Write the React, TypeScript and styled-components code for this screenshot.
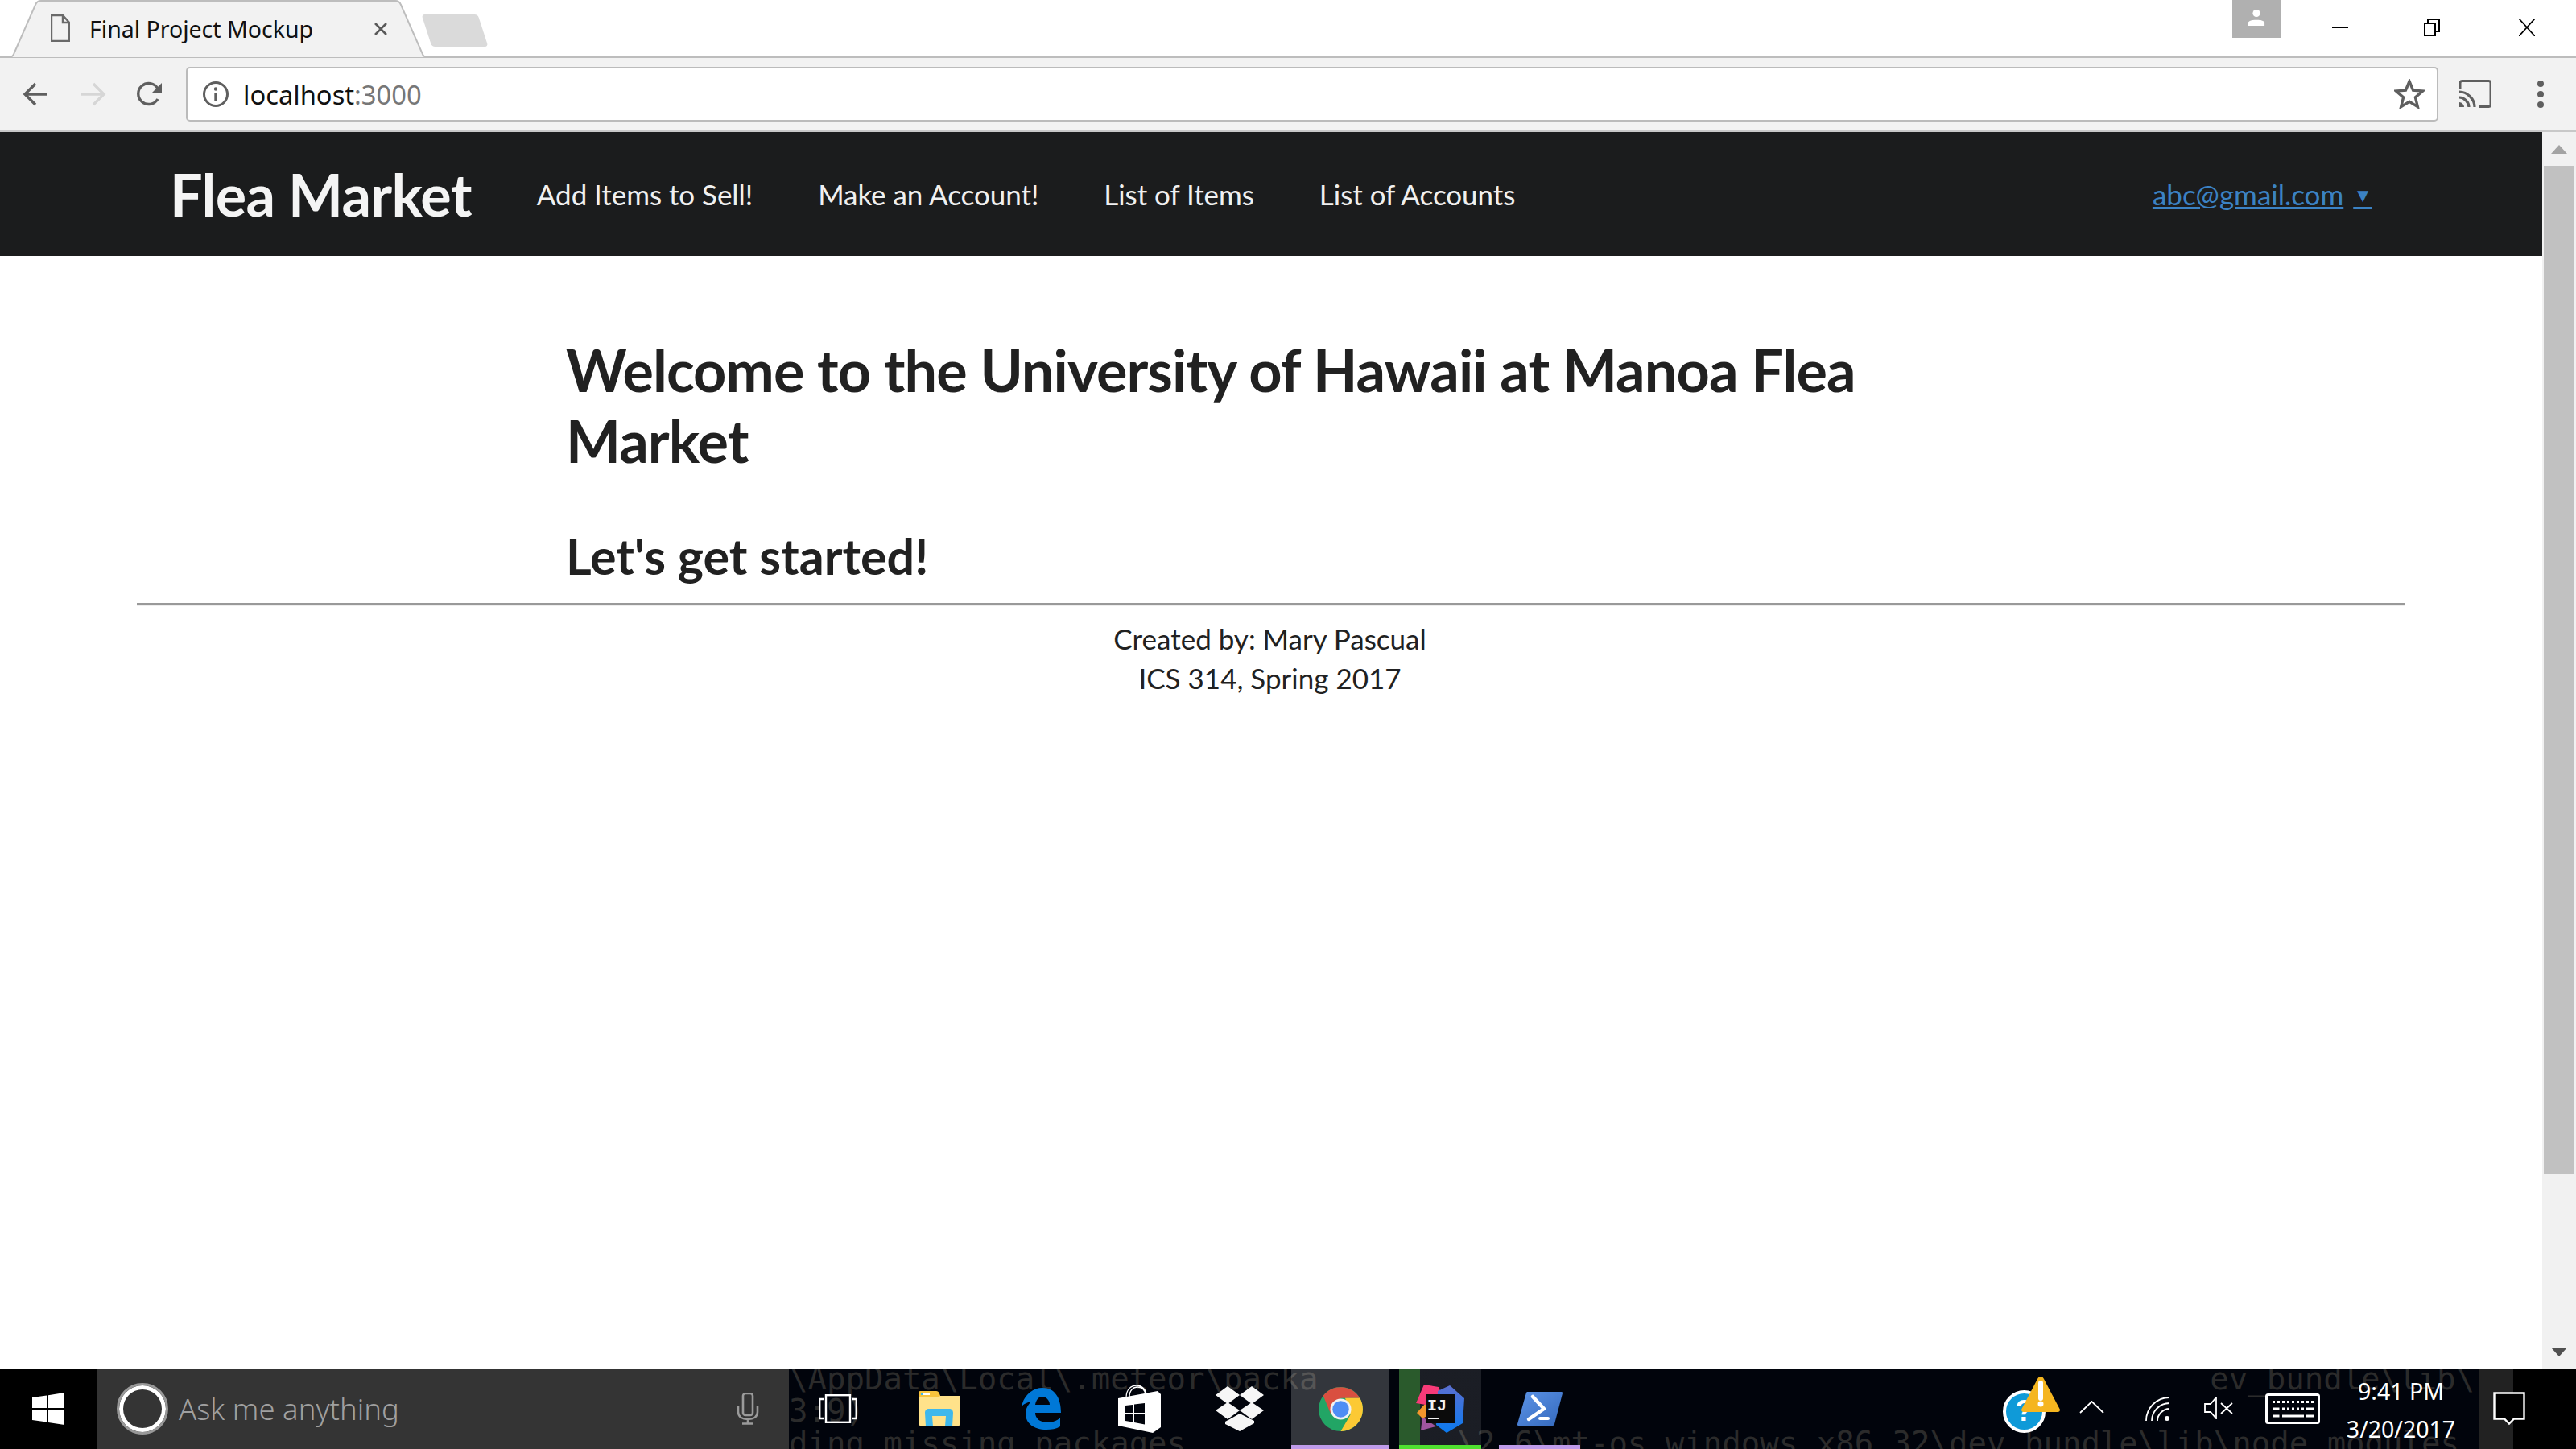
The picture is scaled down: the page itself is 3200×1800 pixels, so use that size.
import React from 'react';
import styled, { createGlobalStyle } from 'styled-components';

const GlobalStyle = createGlobalStyle`
  html, body {
    margin: 0;
    padding: 0;
    background: #fff;
    overflow: hidden;
  }
  * {
    box-sizing: border-box;
  }
`;

const navLinks = ['Add Items to Sell!', 'Make an Account!', 'List of Items', 'List of Accounts'];

const consoleLines = [
  { left: '\\AppData\\Local\\.meteor\\packa', right: 'ev_bundle\\lib\\', tail: 5 },
  { left: '3:9)', right: '', tail: 0 },
  { left: 'ding missing packages', right: '\\2_6\\mt-os.windows.x86_32\\dev_bundle\\lib\\node_modules', tail: 24 },
];

export default function App(): React.ReactElement {
  return (
    <>
      <GlobalStyle />
      <Screen>
        <TabStrip>
          <Tab>
            <TabShape viewBox="0 0 520 71" width="520" height="71">
              <path d="M0 71c4 0 6-2 7-6L33 6c1-3 3-5 7-5h440c4 0 6 2 7 5l26 59c1 4 3 6 7 6" fill="#f2f2f2" stroke="#bdbdbd" strokeWidth="2" />
            </TabShape>
            <Favicon viewBox="0 0 24 34" width="24" height="34">
              <path d="M1 1h14l8 9v23H1z M15 1v9h8" fill="#f2f2f2" stroke="#6a6a6a" strokeWidth="2.4" />
            </Favicon>
            <TabTitle>Final Project Mockup</TabTitle>
            <TabClose viewBox="0 0 18 18" width="18" height="18">
              <path d="M2 2l14 14M16 2L2 16" stroke="#5a5a5a" strokeWidth="2.6" />
            </TabClose>
          </Tab>
          <NewTab />
          <WindowControls>
            <ProfileBadge>
              <svg viewBox="0 0 24 24" width="22" height="26">
                <circle cx="12" cy="6" r="5" fill="#fff" />
                <path d="M1 23v-5c3-3 7-3 11-3s8 0 11 3v5z" fill="#fff" />
              </svg>
            </ProfileBadge>
            <WindowButton $width={114}>
              <svg viewBox="0 0 20 20" width="20" height="20"><path d="M0 10h20" stroke="#000" strokeWidth="2" /></svg>
            </WindowButton>
            <WindowButton $width={114}>
              <svg viewBox="0 0 20 22" width="20" height="22">
                <path d="M1 6h13v15H1z M5 6V1h14v15h-5" fill="none" stroke="#000" strokeWidth="2" />
              </svg>
            </WindowButton>
            <WindowButton $width={122}>
              <svg viewBox="0 0 20 22" width="20" height="22"><path d="M0 0l20 22M20 0L0 22" stroke="#000" strokeWidth="1.7" /></svg>
            </WindowButton>
          </WindowControls>
        </TabStrip>

        <Toolbar>
          <ToolButton>
            <svg viewBox="0 0 36 36" width="36" height="36">
              <path d="M32 18H5M17 5L4 18l13 13" fill="none" stroke="#5f5f5f" strokeWidth="3.4" />
            </svg>
          </ToolButton>
          <ToolButton>
            <svg viewBox="0 0 36 36" width="36" height="36">
              <path d="M4 18h27M19 5l13 13-13 13" fill="none" stroke="#d6d6d6" strokeWidth="3.4" />
            </svg>
          </ToolButton>
          <ToolButton $nudge={2}>
            <svg viewBox="0 0 36 36" width="36" height="36">
              <path d="M28 24a13 13 0 1 1 0-13" fill="none" stroke="#5f5f5f" strokeWidth="3.4" />
              <path d="M33 4v13H20z" fill="#5f5f5f" />
            </svg>
          </ToolButton>
          <Omnibox>
            <svg viewBox="0 0 34 34" width="34" height="34">
              <circle cx="17" cy="17" r="14.5" fill="none" stroke="#5f5f5f" strokeWidth="3" />
              <circle cx="17" cy="10.5" r="2.2" fill="#5f5f5f" />
              <path d="M17 15v11" stroke="#5f5f5f" strokeWidth="3.4" />
            </svg>
            <UrlText>
              localhost<UrlPort>:3000</UrlPort>
            </UrlText>
            <StarIcon viewBox="0 0 38 38" width="38" height="38">
              <path d="M19 3l4.6 11.2 12 .9-9.200 7.800 2.900 11.700L19 28.300 8.700 34.600l2.900-11.700-9.200-7.800 12-.9z" fill="none" stroke="#5f5f5f" strokeWidth="3.4" />
            </StarIcon>
          </Omnibox>
          <CastIcon viewBox="0 0 40 36" width="40" height="36">
            <path d="M1 11V4c0-1.500 1-2.500 2.500-2.500h33C38 1.500 39 2.500 39 4v27c0 1.500-1 2.500-2.500 2.500H24" fill="none" stroke="#5f5f5f" strokeWidth="3" />
            <path d="M0 15c10 0 19 9 19 19M0 22c6 0 12 6 12 12" fill="none" stroke="#5f5f5f" strokeWidth="3.200" />
            <path d="M0 28c3 0 6 3 6 6H0z" fill="#5f5f5f" />
          </CastIcon>
          <MenuDots>
            <Dot />
            <Dot />
            <Dot />
          </MenuDots>
        </Toolbar>

        <Viewport>
          <Page>
            <Navbar>
              <Brand>Flea Market</Brand>
              {navLinks.map((link) => (
                <NavLink key={link}>{link}</NavLink>
              ))}
              <UserMenu>
                abc@gmail.com<Caret>▼</Caret>
              </UserMenu>
            </Navbar>
            <Content>
              <Heading>Welcome to the University of Hawaii at Manoa Flea Market</Heading>
              <SubHeading>Let's get started!</SubHeading>
            </Content>
            <Divider />
            <Footer>
              Created by: Mary Pascual
              <br />
              ICS 314, Spring 2017
            </Footer>
          </Page>
          <Scrollbar>
            <ScrollArrow $up />
            <ScrollTrack>
              <ScrollThumb />
            </ScrollTrack>
            <ScrollArrow />
          </Scrollbar>
        </Viewport>

        <Taskbar>
          <ConsoleBackdrop>
            {consoleLines.map((line) => (
              <ConsoleLine key={line.left} $tail={line.tail}>
                <span>{line.left}</span>
                <span>{line.right}</span>
              </ConsoleLine>
            ))}
          </ConsoleBackdrop>
          <StartButton>
            <svg viewBox="0 0 40 40" width="40" height="40">
              <path d="M0 6l18-2.500V19H0zM20 3.200L40 0v19H20zM0 21h18v15.500L0 34zM20 21h20v19l-20-3z" fill="#fff" />
            </svg>
          </StartButton>
          <SearchBox>
            <CortanaRing />
            <SearchText>Ask me anything</SearchText>
            <MicIcon viewBox="0 0 28 40" width="28" height="40">
              <rect x="8" y="1" width="12" height="27" rx="3" fill="none" stroke="#9a9a9a" strokeWidth="2.600" />
              <path d="M2 17v7c0 6 5 9 12 9s12-3 12-9v-7M14 33v5M7 38.500h14" fill="none" stroke="#9a9a9a" strokeWidth="2.600" />
            </MicIcon>
          </SearchBox>
          <TaskSlot $width={122}>
            <svg viewBox="0 0 48 36" width="48" height="36">
              <rect x="9" y="1.200" width="30" height="33.600" fill="none" stroke="#fff" strokeWidth="2.400" />
              <path d="M6 6H1.200v24H6M42 6h4.800v24H42" fill="none" stroke="#fff" strokeWidth="2.400" />
            </svg>
          </TaskSlot>
          <TaskSlot $width={130}>
            <svg viewBox="0 0 52 44" width="52" height="44">
              <path d="M0 4h24l3 2h24c0.500 0 1 0.500 1 1v34c0 1-1 2-2 2H2c-1 0-2-1-2-2z" fill="#ffe28a" />
              <path d="M0 2c0-1 1-2 2-2h20c2 0 3 1 4 3l1 3-3 2H0z" fill="#f9c33c" />
              <path d="M9 44l-1-17c0-3 2-5 5-5h25c3 0 5 2 5 5l-1 17h-9l1-13H17l1 13z" fill="#3fb8ec" />
              <rect x="5" y="3" width="9" height="2" fill="#fff" />
              <rect x="3" y="3" width="2" height="2" fill="#3fb8ec" />
            </svg>
          </TaskSlot>
          <TaskSlot $width={122}>
            <svg viewBox="0 0 49 52" width="49" height="52">
              <path fillRule="evenodd" d="M0 23C3 9 14 0 26 0c15 0 23 12 23 31H17c0 7 6 12 15 12 6 0 12-2 16-6v11c-5 3-11 4-17 4C15 52 5 44 5 32c0-6 3-11 7-15-5 1-9 3-12 6zM17 21h18c0-6-5-10-9-10-5 0-8 4-9 10z" fill="#0078d7" />
            </svg>
          </TaskSlot>
          <TaskSlot $width={122}>
            <svg viewBox="0 0 53 60" width="53" height="60">
              <path d="M10 16C10 5 17 1 23 1c7 0 12 6 12 12M14 15C14 7 19 3 24 3c6 0 9 4 10 9" fill="none" stroke="#fff" strokeWidth="1.300" />
              <path d="M0 17l49-9 4 4v41l-10 7L0 51z" fill="#fff" />
              <path d="M9 26l9-1v10H9zM20 24.500l13-1.500v12H20zM9 37h9v9.500l-9-1.500zM20 37h13v12.500l-13-2.500z" fill="#01040c" />
            </svg>
          </TaskSlot>
          <TaskSlot $width={128}>
            <svg viewBox="0 0 60 56" width="60" height="56">
              <path d="M0 11L15 0l15 11-15 11zM30 11L45 0l15 11-15 11zM0 30l15-10 15 10-15 11zM30 30l15-10 15 10-15 11zM12 44l18-10 18 9v3L30 56 12 47z" fill="#f6f6f6" />
            </svg>
          </TaskSlot>
          <TaskSlot $width={122} $background="rgba(255, 255, 255, 0.2)" $underline="#bf9bea">
            <svg viewBox="0 0 55 55" width="55" height="55">
              <circle cx="27.500" cy="27.500" r="27.500" fill="#22a565" />
              <path d="M5.800 10.800A27.500 27.500 0 0 1 51.300 13.800H27.500L15.500 34.500z" fill="#d94f40" />
              <path d="M51.300 13.800A27.500 27.500 0 0 1 27.500 55L39.500 34.500 33 13.800z" fill="#fcc934" />
              <circle cx="27.500" cy="27.500" r="13" fill="#f1f1f1" />
              <circle cx="27.500" cy="27.500" r="10.200" fill="#4e8df5" />
            </svg>
          </TaskSlot>
          <TaskSlot
            $width={102}
            $offset={12}
            $background="linear-gradient(90deg, #2a5a2c 26px, rgba(255, 255, 255, 0.1) 26px)"
            $underline="#4fe02f"
          >
            <svg viewBox="0 0 60 60" width="60" height="60">
              <defs>
                <linearGradient id="ijBlue" x1="0" y1="0" x2="0" y2="1">
                  <stop offset="0" stopColor="#5a6fd0" />
                  <stop offset="1" stopColor="#0a7af0" />
                </linearGradient>
              </defs>
              <path d="M6 57l2-17 17 12z" fill="#a0559f" />
              <path d="M1 35l11-12v17l-4 2z" fill="#f2962c" />
              <path d="M0 23L10 0l18 3 7 17-23 5z" fill="#f73a78" />
              <path d="M27 8L42 1l18 16-2 31-20 12-13-10z" fill="url(#ijBlue)" />
              <rect x="12" y="12" width="36" height="36" fill="#0b0b0b" />
              <text x="14" y="32" fill="#f2f2f2" fontFamily="Liberation Mono" fontWeight="700" fontSize="20">IJ</text>
              <rect x="15" y="41" width="13" height="2" fill="#f2f2f2" />
            </svg>
          </TaskSlot>
          <TaskSlot $width={101} $offset={22} $underline="#bf9bea">
            <svg viewBox="0 0 56 42" width="56" height="42">
              <defs>
                <linearGradient id="psBlue" x1="0" y1="0" x2="1" y2="1">
                  <stop offset="0" stopColor="#5c93e6" />
                  <stop offset="1" stopColor="#3469bd" />
                </linearGradient>
              </defs>
              <path d="M11 1c0-.500 1-1 2-1h42c1 0 1 1 1 2L46 40c0 1-1 2-2 2H1c-1 0-1-1-1-2z" fill="url(#psBlue)" />
              <path d="M19 6l14 15-19 13" fill="none" stroke="#fff" strokeWidth="4.500" strokeLinecap="round" strokeLinejoin="round" />
              <path d="M28 33h10" stroke="#fff" strokeWidth="4" strokeLinecap="round" />
            </svg>
          </TaskSlot>
          <Tray>
            <HelpBadge>
              <HelpMark>?</HelpMark>
              <WarningIcon viewBox="0 0 48 44" width="48" height="44">
                <path d="M24 0c2 0 3 1 4 3l20 38c0 2-1 3-3 3H3c-2 0-3-1-3-3L20 3c1-2 2-3 4-3z" fill="#f5b51f" />
                <path d="M24 8v19" stroke="#fff" strokeWidth="6" strokeLinecap="round" />
                <circle cx="24" cy="34" r="3.500" fill="#fff" />
              </WarningIcon>
            </HelpBadge>
            <TrayIcon $width={31} $left={42} $rise={4}>
              <svg viewBox="0 0 31 16" width="31" height="16"><path d="M1 15L15.500 1 30 15" fill="none" stroke="#fff" strokeWidth="1.800" /></svg>
            </TrayIcon>
            <TrayIcon $width={32} $left={51}>
              <svg viewBox="0 0 32 30" width="32" height="30">
                <path d="M1 30C1 14 14 1 30 1M8 30C8 18 18 8 30 8M15 30c0-8 7-15 15-15" fill="none" stroke="#fff" strokeWidth="1.800" />
                <circle cx="27" cy="27" r="3" fill="#fff" />
              </svg>
            </TrayIcon>
            <TrayIcon $width={37} $left={41} $rise={2}>
              <svg viewBox="0 0 37 28" width="37" height="28">
                <path d="M1 9h7l7-8v26l-7-8H1z" fill="none" stroke="#fff" strokeWidth="1.800" />
                <path d="M21 8l14 13M35 8L21 21" stroke="#fff" strokeWidth="1.800" />
              </svg>
            </TrayIcon>
            <KeyboardIcon viewBox="0 0 68 38" width="68" height="38">
              <rect x="1.500" y="1.500" width="65" height="35" rx="2" fill="none" stroke="#fff" strokeWidth="3" />
              <path d="M9 10.500h51" stroke="#fff" strokeWidth="3" strokeDasharray="3 3" />
              <path d="M21 19h27" stroke="#fff" strokeWidth="3" strokeDasharray="3 3" />
              <path d="M9 19h8.500M51 19h9M9 28h8.500M21 28h27M51 28h9" stroke="#fff" strokeWidth="3" />
            </KeyboardIcon>
            <Clock>
              <span>9:41 PM</span>
              <span>3/20/2017</span>
            </Clock>
            <ActionCenter>
              <svg viewBox="0 0 40 42" width="40" height="42">
                <path d="M1.500 1.500h37v32H26l-6 6-6-6H1.500z" fill="#000" stroke="#fff" strokeWidth="2.400" />
              </svg>
            </ActionCenter>
          </Tray>
        </Taskbar>
      </Screen>
    </>
  );
}

const Screen = styled.div`
  width: 3200px;
  height: 1800px;
  display: flex;
  flex-direction: column;
  overflow: hidden;
  font-family: 'Lato', 'Noto Sans', sans-serif;
`;

const TabStrip = styled.div`
  height: 72px;
  flex: none;
  display: flex;
  align-items: flex-start;
  padding-left: 11px;
  border-bottom: 2px solid #bdbdbd;
  background: #fff;
`;

const Tab = styled.div`
  position: relative;
  width: 520px;
  height: 72px;
  flex: none;
  display: flex;
  align-items: center;
  padding: 0 0 0 52px;
`;

const TabShape = styled.svg`
  position: absolute;
  left: 0;
  top: 0;
`;

const Favicon = styled.svg`
  position: relative;
  flex: none;
  margin-bottom: 2px;
`;

const TabTitle = styled.span`
  position: relative;
  margin-left: 24px;
  width: 353px;
  font: 28.500px 'Noto Sans', sans-serif;
  color: #111;
  white-space: nowrap;
`;

const TabClose = styled.svg`
  position: relative;
  flex: none;
`;

const NewTab = styled.div`
  width: 70px;
  height: 40px;
  flex: none;
  margin: 18px 0 0 -1px;
  border-radius: 4px;
  background: #dadada;
  transform: skewX(18deg);
`;

const WindowControls = styled.div`
  margin-left: auto;
  display: flex;
  align-items: flex-start;
`;

const ProfileBadge = styled.div`
  width: 60px;
  height: 47px;
  margin-right: 17px;
  display: flex;
  justify-content: center;
  padding-top: 9px;
  background: #b0b0b0;
`;

const WindowButton = styled.div<{ $width: number }>`
  width: ${(p) => p.$width}px;
  height: 68px;
  display: flex;
  align-items: center;
  justify-content: center;
`;

const Toolbar = styled.div`
  height: 92px;
  flex: none;
  display: flex;
  align-items: center;
  padding-left: 10px;
  background: #f2f2f2;
  border-bottom: 2px solid #c8c8c8;
`;

const ToolButton = styled.div<{ $nudge?: number }>`
  width: 70px;
  display: flex;
  justify-content: center;
  padding-left: ${(p) => p.$nudge ?? 0}px;
`;

const Omnibox = styled.div`
  width: 2798px;
  height: 68px;
  margin-left: 11px;
  flex: none;
  display: flex;
  align-items: center;
  padding: 0 15px 0 18px;
  background: #fff;
  border: 2px solid #bbb;
  border-radius: 5px;
`;

const UrlText = styled.span`
  margin-left: 17px;
  font: 32.700px 'Noto Sans', sans-serif;
  color: #111;
`;

const UrlPort = styled.span`
  color: #777;
`;

const StarIcon = styled.svg`
  margin-left: auto;
`;

const CastIcon = styled.svg`
  flex: none;
  margin-left: 26px;
`;

const MenuDots = styled.div`
  margin-left: 57px;
  display: flex;
  flex-direction: column;
  gap: 5px;
`;

const Dot = styled.i`
  display: block;
  width: 8px;
  height: 8px;
  border-radius: 50%;
  background: #5f5f5f;
`;

const Viewport = styled.div`
  flex: 1;
  display: flex;
  min-height: 0;
`;

const Page = styled.main`
  flex: 1;
  min-width: 0;
  background: #fff;
`;

const Navbar = styled.nav`
  height: 154px;
  display: flex;
  align-items: center;
  gap: 81px;
  padding: 0 211px;
  background: #1b1c1d;
`;

const Brand = styled.div`
  font-size: 72px;
  font-weight: 700;
  letter-spacing: -0.7px;
  color: #f4f4f4;
  white-space: nowrap;
`;

const NavLink = styled.a`
  font-size: 35px;
  letter-spacing: -0.05px;
  color: #f0f0f0;
  white-space: nowrap;
`;

const UserMenu = styled.a`
  margin-left: auto;
  font-size: 35px;
  color: #3b82c4;
  text-decoration: underline;
  white-space: nowrap;
`;

const Caret = styled.span`
  margin-left: 12px;
  font-size: 24px;
  vertical-align: 4px;
`;

const Content = styled.section`
  width: 1752px;
  margin: 0 auto;
  padding-top: 97px;
`;

const Heading = styled.h1`
  margin: 0;
  font-size: 72px;
  line-height: 88px;
  font-weight: 700;
  letter-spacing: -0.9px;
  color: #212121;
`;

const SubHeading = styled.h2`
  margin: 64px 0 0;
  font-size: 61px;
  line-height: 72px;
  font-weight: 700;
  color: #212121;
`;

const Divider = styled.hr`
  margin: 22px 170px 0;
  height: 4px;
  border: 0;
  border-top: 2px solid #999;
  border-bottom: 2px solid #eee;
`;

const Footer = styled.footer`
  margin-top: 16px;
  padding-right: 3px;
  text-align: center;
  font-size: 35px;
  line-height: 49px;
  color: #212121;
`;

const Scrollbar = styled.div`
  width: 42px;
  flex: none;
  display: flex;
  flex-direction: column;
  background: #f1f1f1;
`;

const ScrollArrow = styled.div<{ $up?: boolean }>`
  height: 42px;
  flex: none;
  display: flex;
  align-items: center;
  justify-content: center;
  &::before {
    content: '';
    border-left: 10px solid transparent;
    border-right: 10px solid transparent;
    ${(p) => (p.$up ? 'border-bottom: 11px solid #a3a3a3;' : 'border-top: 11px solid #505050;')}
  }
`;

const ScrollTrack = styled.div`
  flex: 1;
  padding: 0 2px;
`;

const ScrollThumb = styled.div`
  height: 1252px;
  background: #c1c1c1;
`;

const Taskbar = styled.footer`
  position: relative;
  height: 100px;
  flex: none;
  display: flex;
  overflow: hidden;
  background: #01040c;
`;

const ConsoleBackdrop = styled.div`
  position: absolute;
  left: 980px;
  top: -7px;
  width: 2099px;
  height: 107px;
  overflow: hidden;
  font: 39px/40px 'DejaVu Sans Mono', monospace;
  color: #2b2b2b;
`;

const ConsoleLine = styled.div<{ $tail: number }>`
  display: flex;
  justify-content: space-between;
  padding-right: ${(p) => p.$tail}px;
  white-space: pre;
`;

const StartButton = styled.div`
  position: relative;
  width: 120px;
  flex: none;
  display: flex;
  align-items: center;
  justify-content: center;
  background: #000;
`;

const SearchBox = styled.div`
  position: relative;
  width: 860px;
  flex: none;
  display: flex;
  align-items: center;
  padding: 0 37px 0 25px;
  background: #343434;
`;

const CortanaRing = styled.div`
  width: 64px;
  height: 64px;
  flex: none;
  border-radius: 50%;
  background: #343434;
  border: 3px solid #999;
  box-shadow: inset 0 0 0 5px #fff;
`;

const SearchText = styled.span`
  margin-left: 13px;
  font: 300 36.500px 'Noto Sans', sans-serif;
  color: #a0a0a0;
  white-space: nowrap;
`;

const MicIcon = styled.svg`
  margin-left: auto;
`;

const TaskSlot = styled.div<{ $width: number; $offset?: number; $background?: string; $underline?: string }>`
  position: relative;
  width: ${(p) => p.$width}px;
  margin-left: ${(p) => p.$offset ?? 0}px;
  flex: none;
  display: flex;
  align-items: center;
  justify-content: center;
  background: ${(p) => p.$background ?? 'transparent'};
  box-shadow: inset 0 -5px 0 ${(p) => p.$underline ?? 'transparent'};
`;

const Tray = styled.div`
  position: relative;
  flex: 1;
  display: flex;
  align-items: center;
  padding-left: 525px;
`;

const HelpBadge = styled.div`
  position: relative;
  width: 53px;
  height: 53px;
  flex: none;
  margin-top: 6px;
  display: flex;
  align-items: center;
  justify-content: center;
  border-radius: 50%;
  border: 4px solid #fff;
  background: #0f9ad8;
`;

const HelpMark = styled.span`
  font: 700 36px 'Liberation Sans', sans-serif;
  color: #fff;
`;

const WarningIcon = styled.svg`
  position: absolute;
  left: 19px;
  top: -21px;
`;

const TrayIcon = styled.div<{ $width: number; $left: number; $rise?: number }>`
  width: ${(p) => p.$width}px;
  margin-left: ${(p) => p.$left}px;
  margin-bottom: ${(p) => p.$rise ?? 0}px;
  flex: none;
  display: flex;
`;

const KeyboardIcon = styled.svg`
  flex: none;
  margin-left: 39px;
`;

const Clock = styled.div`
  width: 167px;
  height: 100px;
  margin-left: 17px;
  padding-top: 3px;
  flex: none;
  display: flex;
  flex-direction: column;
  justify-content: center;
  gap: 15px;
  align-items: center;
  font: 28.500px/32px 'Noto Sans', sans-serif;
  color: #fff;
  white-space: nowrap;
`;

const ActionCenter = styled.div`
  width: 121px;
  height: 100px;
  margin-left: 13px;
  padding-right: 45px;
  flex: none;
  display: flex;
  align-items: center;
  justify-content: center;
  background: linear-gradient(90deg, #222 43px, #000 43px);
`;
